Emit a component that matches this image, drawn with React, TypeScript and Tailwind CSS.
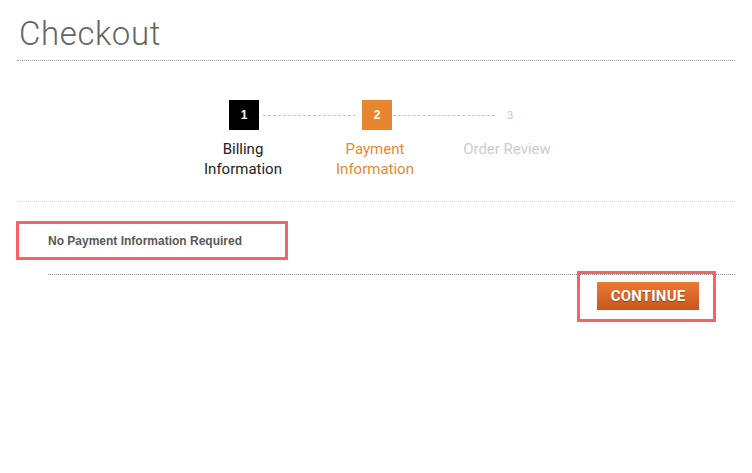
export default function App() {
  return (
    <div className="w-[752px] h-[473px] bg-white px-[17px] pt-[14px] font-['Roboto',sans-serif]">
      {/* Title */}
      <div className="border-b border-dotted border-[#9a9a9a] pb-[6px]">
        <h1 className="pl-[2px] text-[33px] leading-[40px] font-light text-[#666] tracking-[0.6px]">Checkout</h1>
      </div>

      {/* Steps */}
      <div className="border-b border-dotted border-[#d4d4d4] pt-[39px] pb-[22px]">
        <div className="flex items-center ml-[212px]">
          <div className="w-[30px] h-[30px] bg-black text-white text-[12px] font-bold flex items-center justify-center font-['Liberation_Sans',sans-serif]">1</div>
          <div className="w-[93px] ml-[4px] mr-[6px] border-t border-dashed border-[#c8c8c8]" />
          <div className="w-[30px] h-[30px] bg-[#e8862f] text-white text-[12px] font-bold flex items-center justify-center font-['Liberation_Sans',sans-serif]">2</div>
          <div className="w-[102px] ml-[1px] border-t border-dashed border-[#c8c8c8]" />
          <div className="w-[30px] h-[30px] text-[#c8c8c8] text-[11px] flex items-center justify-center font-['Liberation_Sans',sans-serif]">3</div>
        </div>
        <div className="grid grid-cols-3 w-[396px] ml-[160px] mt-[9px] text-[15px] leading-[20px] text-center">
          <div className="text-[#222]">Billing<br />Information</div>
          <div className="text-[#e8892f]">Payment<br />Information</div>
          <div className="text-[#cdcdcd]">Order Review</div>
        </div>
      </div>

      {/* Notice */}
      <div className="mt-[19px] -ml-[1px] w-[272px] h-[39px] border-[3px] border-[#f56464] flex items-center pl-[29px]">
        <span className="font-['Liberation_Sans',sans-serif] font-bold text-[12px] text-[#585858]">No Payment Information Required</span>
      </div>

      <div className="ml-[31px] mt-[14px] border-t border-dotted border-[#8a8a8a]" />

      {/* Continue */}
      <div className="flex justify-end pr-[36px] mt-[7px]">
        <div className="relative">
          <button className="w-[102px] h-[28px] bg-gradient-to-b from-[#ec7a34] to-[#c8561d] text-white text-[15px] font-bold tracking-[0.2px] flex items-center justify-center [text-shadow:0_1px_1px_rgba(0,0,0,0.35)]">
            CONTINUE
          </button>
          <div className="absolute -left-[20px] -right-[17px] -top-[11px] -bottom-[12px] border-[3px] border-[#f56464] pointer-events-none" />
        </div>
      </div>
    </div>
  )
}
